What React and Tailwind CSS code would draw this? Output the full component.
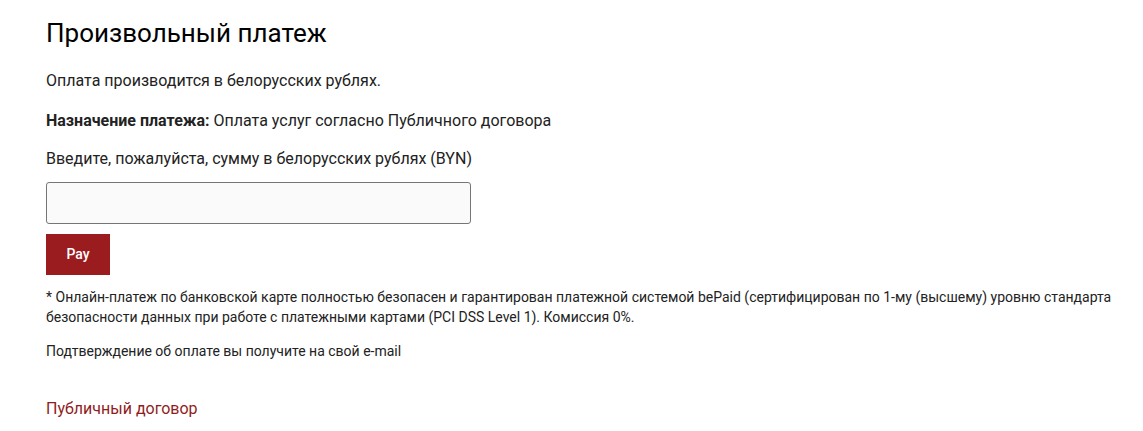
export default function App() {
  return (
    <div className="w-[1143px] h-[431px] bg-white text-[#222] font-['Roboto',sans-serif]">
      <div className="pl-[46px] pr-[20px] pt-[16px]">
        <h1 className="text-[26px] leading-[34px] font-normal text-black">Произвольный платеж</h1>
        <p className="mt-[21px] text-[16px] leading-[20px]">Оплата производится в белорусских рублях.</p>
        <p className="mt-[20px] text-[16px] leading-[20px]">
          <span className="font-bold">Назначение платежа:</span> Оплата услуг согласно Публичного договора
        </p>
        <p className="mt-[18px] text-[16px] leading-[20px]">Введите, пожалуйста, сумму в белорусских рублях (BYN)</p>
        <input
          type="text"
          className="mt-[13px] block w-[425px] h-[42px] bg-[#fafafa] border border-[#767676] rounded-[3px] outline-none px-2"
        />
        <button className="mt-[10px] block w-[64px] h-[41px] bg-[#9b1c1f] text-white text-[14px] font-medium">
          Pay
        </button>
        <p className="mt-[12px] text-[14px] leading-[20px]">
          * Онлайн-платеж по банковской карте полностью безопасен и гарантирован платежной системой bePaid (сертифицирован по 1-му (высшему) уровню стандарта безопасности данных при работе с платежными картами (PCI DSS Level 1). Комиссия 0%.
        </p>
        <p className="mt-[14px] text-[14px] leading-[20px]">Подтверждение об оплате вы получите на свой e-mail</p>
        <a href="#" className="block mt-[38px] text-[16px] leading-[20px] text-[#8f1d1d]">Публичный договор</a>
      </div>
    </div>
  );
}
